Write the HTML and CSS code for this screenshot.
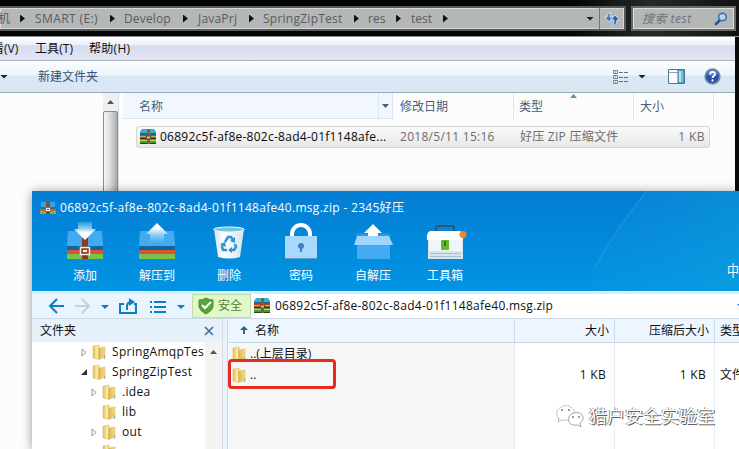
FILE: index.html
```html
<!DOCTYPE html>
<html lang="zh-CN">
<head>
<meta charset="utf-8">
<title>test</title>
<link rel="stylesheet" href="styles.css">
</head>
<body>
<svg class="defs" width="0" height="0">
  <defs>
    <linearGradient id="fold" x1="0" x2="1"><stop offset="0" stop-color="#e3bd4e"/><stop offset=".35" stop-color="#fbeeb0"/><stop offset=".55" stop-color="#e2be57"/><stop offset="1" stop-color="#f3dc85"/></linearGradient>
    <linearGradient id="down" x1="0" x2="0" y1="0" y2="1"><stop offset="0" stop-color="#6dbcf4" stop-opacity=".4"/><stop offset=".6" stop-color="#fff"/></linearGradient>
    <linearGradient id="up" x1="0" x2="0" y1="0" y2="1"><stop offset=".3" stop-color="#fff"/><stop offset="1" stop-color="#6dbcf4" stop-opacity=".3"/></linearGradient>
    <linearGradient id="bin" x1="0" x2="1"><stop offset="0" stop-color="#cfe0ea"/><stop offset=".3" stop-color="#fff"/><stop offset="1" stop-color="#d5e4ec"/></linearGradient>
    <symbol id="zip" viewBox="0 0 16 16">
      <path d="M2 0h12l2 3v3H0V3z" fill="#3babd4"/><path d="M0 4h16v2H0z" fill="#186d91"/>
      <path d="M0 6h16v4H0z" fill="#bf4223"/><path d="M0 7h16v1H0z" fill="#f29a5e"/>
      <path d="M0 10h16v5H0z" fill="#459c2c"/><path d="M0 11h16v1H0z" fill="#a9df61"/><path d="M0 9.5h16M0 14.5h16" stroke="#333a20"/>
      <path d="M7 0h3v15H7z" fill="#8d5a32"/><path d="M6.5 7h4v3h-4z" fill="#e6bd6b" stroke="#684c22"/>
    </symbol>
    <symbol id="folder" viewBox="0 0 14 16">
      <path d="M1 2l6-1v3l6-1v10l-6 2.500-6-1.500z" fill="url(#fold)" stroke="#dcbf6a" stroke-width=".6"/><path d="M7 4v11" stroke="#cfa848" stroke-width=".8"/><path d="M12 11l1 3-1 1" fill="none" stroke="#92aaa9"/>
    </symbol>
  </defs>
</svg>

<main class="desktop">
  <section class="explorer">
    <header class="top">
      <nav class="address">
        <div class="crumbs"><span class="c0">机</span><i></i><span class="c1">SMART (E:)</span><i></i><span class="c2">Develop</span><i></i><span class="c3">JavaPrj</span><i></i><span class="c4">SpringZipTest</span><i></i><span class="c5">res</span><i></i><span class="c6">test</span><i></i></div>
        <b class="caret"></b>
        <div class="refresh"><svg width="16" height="16" viewBox="0 0 16 16"><path d="M7 1Q3 2 3 6H.5L5 11l4-5H6Q6 3 7 1z" fill="#3f83c6" stroke="#dcecf8" stroke-width=".8"/><path d="M9 15q4-1 4-6h2.500L11 4 7 9h3q0 3-1 6z" fill="#285eb0" stroke="#dcecf8" stroke-width=".8"/></svg></div>
      </nav>
      <div class="search"><span>搜索 test</span><svg width="14" height="14" viewBox="0 0 14 14"><path d="M6 8L2 12" stroke="#25558d" stroke-width="2.500" stroke-linecap="round"/><circle cx="8.5" cy="5" r="3.8" fill="#b6d4e8" stroke="#356da9" stroke-width="1.5"/></svg></div>
    </header>
    <div class="menu"><span class="m0">看(V)</span><span class="m1">工具(T)</span><span class="m2">帮助(H)</span></div>
    <div class="tools">
      <b class="caret"></b><span>新建文件夹</span>
      <svg class="views" width="16" height="14" viewBox="0 0 16 14"><g fill="#f7fbff" stroke="#758292"><path d="M.5.5h4v3h-4zM.5 5.5h4v3h-4zM.5 10.5h4v3h-4z"/></g><path d="M2 2h1M2 7h1M2 12h1" stroke="#3a78af"/><path d="M6 2.500h4M11 2.500h4M6 7.500h4M11 7.500h4M6 11.500h4M11 11.500h4" stroke="#617086"/></svg>
      <b class="caret v"></b>
      <svg class="pane" width="17" height="15" viewBox="0 0 17 15"><path d="M.5.5h16v14H.5z" fill="#f8fcff" stroke="#54758f"/><path d="M1 3.5h9" stroke="#8aa8bc"/><path d="M10 1h6v13h-6z" fill="#74bfd5" stroke="#397b99"/><path d="M12 2v11" stroke="#b8e6ed" stroke-width="2"/></svg>
      <svg class="help" width="17" height="17" viewBox="0 0 17 17"><circle cx="8.5" cy="8.5" r="7.3" fill="#284faa" stroke="#7788a0" stroke-width="1.7"/><path d="M3 7a5.5 5.5 0 0 1 11 0Q8 9 3 7" fill="#6b91d7" opacity=".6"/><path d="M6 6.5Q6 4 8.5 4T11 6.2Q11 7.3 9.6 8.1 8.5 8.7 8.5 10" fill="none" stroke="#fff" stroke-width="1.8"/><circle cx="8.5" cy="12.4" r="1.1" fill="#fff"/></svg>
    </div>
    <div class="body">
      <aside class="nav"><div class="scroll"><b></b><i></i></div></aside>
      <div class="files">
        <div class="cols"><span class="name">名称</span><span class="drop"><b class="caret"></b></span><span class="date">修改日期</span><span class="type">类型<b class="sort"></b></span><span class="size">大小</span></div>
        <div class="row"><svg width="16" height="16"><use href="#zip"/></svg><span class="fname">06892c5f-af8e-802c-8ad4-01f1148afe...</span><span class="fdate">2018/5/11 15:16</span><span class="ftype">好压 ZIP 压缩文件</span><span class="fsize">1 KB</span></div>
      </div>
    </div>
  </section>

  <section class="archiver">
    <header class="blue">
      <svg class="beam" width="280" height="100" viewBox="0 0 280 100"><defs><linearGradient id="beam" x1="0" x2="1"><stop offset="0" stop-color="#2aa4e5" stop-opacity=".1"/><stop offset="1" stop-color="#19b0df" stop-opacity=".5"/></linearGradient></defs><path d="M188 0Q151 46 123 100H280V0z" fill="url(#beam)" opacity=".6"/><path d="M188 0Q158 36 136 76" fill="none" stroke="#50b8ee" stroke-opacity=".22" stroke-width="2"/></svg>
      <div class="title"><svg width="16" height="14" viewBox="0 0 16 14"><path d="M1 1h14v5H1z" fill="#36a5dd"/><path d="M1 6h14v2H1z" fill="#21759c"/><path d="M0 8h16v2H0z" fill="#df5739"/><path d="M0 10h16v3H0z" fill="#6ebc49"/><path d="M6 1h4v12H6z" fill="#8c4932"/><path d="M5.5 6.5h5v4h-5z" fill="#fff" stroke="#9b6553"/><path d="M7 8h2v1H7z" fill="#713b29"/></svg><span>06892c5f-af8e-802c-8ad4-01f1148afe40.msg.zip - 2345好压</span></div>
      <div class="actions">
        <div><svg width="40" height="40" viewBox="0 0 40 40"><path d="M3 11h34l1 15H2z" fill="#43aaf0"/><path d="M2 26h36v4H2z" fill="#12669c"/><path d="M2 30h36v4H2z" fill="#d95235"/><path d="M2 34h36v5H2z" fill="#7ac34b"/><path d="M17 18h6v21h-6z" fill="#8b3920"/><path d="M15.5 27.500h9v7h-9z" fill="#8e462f" stroke="#f7e7dd" stroke-width="1.5"/><path d="M18 30h4v2h-4z" fill="#fff"/><path d="M13 2h14v7h4L20 20 9 9h4z" fill="url(#down)"/></svg><span>添加</span></div>
        <div><svg width="40" height="40" viewBox="0 0 40 40"><path d="M3 11h34l1 15H2z" fill="#43aaf0"/><path d="M2 26h36v4H2z" fill="#0c679f"/><path d="M2 30h36v4H2z" fill="#d95235"/><path d="M2 34h36v5H2z" fill="#7ac34b"/><path d="M20 3L31 14h-4v8H13v-8H9z" fill="url(#up)"/></svg><span>解压到</span></div>
        <div><svg width="40" height="40" viewBox="0 0 40 40"><path d="M5 9h30l-4 28q-11 3-22 0z" fill="url(#bin)"/><ellipse cx="20" cy="9.5" rx="15.5" ry="2.5" fill="#73c5df" stroke="#eefbff"/><g fill="none" stroke="#2f93d6" stroke-width="2.500"><path d="M16 22l3-5h3l2 3M26 24l1 3-2 3h-3M18 30h-4l-1-3 1-3"/></g><g fill="#2f93d6"><path d="M26 17v6l-5-2zM23 27v6l-4-3zM11 24l5-2 1 5z"/></g></svg><span>删除</span></div>
        <div><svg width="40" height="40" viewBox="0 0 40 40"><path d="M11 18v-4a9 9 0 0 1 18 0v4" fill="none" stroke="#fff" stroke-width="4"/><rect x="4" y="16" width="32" height="22" rx="1" fill="#aad9fd"/><path d="M4 38.500h32" stroke="#5d9ecc"/><circle cx="20" cy="26" r="3" fill="#427fbd"/><path d="M19 26h2v6h-2z" fill="#427fbd"/></svg><span>密码</span></div>
        <div><svg width="40" height="40" viewBox="0 0 40 40"><path d="M1 16q3-5 14-2h10q11-3 14 2" fill="#239be5" stroke="#168ad3"/><path d="M20 4l9 9h-4v6H15v-6h-4z" fill="#fff"/><path d="M4 20h33v19H4z" fill="#44aaf2"/><path d="M4 16h32l4 9H1z" fill="#9dd5fc"/></svg><span>自解压</span></div>
        <div><svg class="box" width="42" height="40" viewBox="0 0 42 40"><path d="M11 12V8q0-2 3-2h12q3 0 3 2v4" fill="none" stroke="#31546c" stroke-width="2"/><path d="M3 20h35v19H3z" fill="#d7e4ec"/><path d="M5 11h30q4 2 3 9H2q-1-7 3-9z" fill="#fff"/><path d="M4 20h33v11H4z" fill="#edf6fa"/><path d="M5 33.500h31M5 36.500h31" stroke="#a9c0ce"/><rect x="16" y="20" width="8" height="10" rx="1" fill="#64b82b"/><path d="M20 21v5" stroke="#286911" stroke-width="1.5"/><circle cx="38" cy="14.5" r="3.5" fill="#f58424"/></svg><span>工具箱</span></div>
      </div>
      <span class="ime">中</span>
    </header>
    <div class="path">
      <svg width="160" height="24" viewBox="0 0 160 24"><g fill="none" stroke="#087fc7" stroke-width="2"><path d="M32 12H19M25 5l-7 7 7 7"/><path stroke="#c5cfd5" d="M43 12h13M50 5l7 7-7 7"/><path d="M92 10h-4v9h16v-9h-2M95 16v-4q0-4 5-4"/></g><path d="M69 11h8l-4 4zM145 11h8l-4 4z" fill="#087fc7"/><path d="M97 4l6 4-6 4z" fill="#087fc7"/><path d="M118 8h2M122 8h12M118 13h2M122 13h12M118 18h2M122 18h12" stroke="#087fc7" stroke-width="2"/></svg>
      <div class="safe"><svg width="18" height="18" viewBox="0 0 18 18"><path d="M9 1q3 2 7 2v7q-1 4-7 7-6-3-7-7V3q4 0 7-2z" fill="#57a53a" stroke="#4c9038"/><path d="M5 8l3 3 6-6" fill="none" stroke="#fff" stroke-width="2"/></svg><span>安全</span></div>
      <div class="file"><svg width="16" height="16"><use href="#zip"/></svg><span>06892c5f-af8e-802c-8ad4-01f1148afe40.msg.zip</span><b></b></div>
    </div>
    <div class="content">
      <aside class="tree">
        <header><span>文件夹</span><svg width="10" height="10" viewBox="0 0 10 10"><path d="M1 1l8 8M9 1L1 9" stroke="#416b8e" stroke-width="1.6"/></svg></header>
        <div class="treebody">
          <ul>
            <li class="clip"><svg class="tri" width="7" height="9" viewBox="0 0 7 9"><path d="M1 1v7l4-3.5z" fill="#fff" stroke="#999"/></svg><svg width="14" height="16"><use href="#folder"/></svg><span>SpringAmqpTes</span></li>
            <li><svg class="tri" width="7" height="9" viewBox="0 0 7 9"><path d="M6 1v6H0z" fill="#333"/></svg><svg width="14" height="16"><use href="#folder"/></svg><span>SpringZipTest</span></li>
            <li class="deep"><svg class="tri" width="7" height="9" viewBox="0 0 7 9"><path d="M1 1v7l4-3.5z" fill="#fff" stroke="#999"/></svg><svg width="14" height="16"><use href="#folder"/></svg><span>.idea</span></li>
            <li class="deep"><i class="tri"></i><svg width="14" height="16"><use href="#folder"/></svg><span>lib</span></li>
            <li class="deep"><svg class="tri" width="7" height="9" viewBox="0 0 7 9"><path d="M1 1v7l4-3.5z" fill="#fff" stroke="#999"/></svg><svg width="14" height="16"><use href="#folder"/></svg><span>out</span></li>
            <li class="deep"><i class="tri"></i><svg width="14" height="16"><use href="#folder"/></svg></li>
          </ul>
          <div class="track"><b></b></div>
        </div>
      </aside>
      <div class="split"></div>
      <div class="list">
        <div class="heads"><span><svg width="8" height="9" viewBox="0 0 8 9"><path d="M4 0l4 4H5v4H3V4H0z" fill="#296793"/></svg><em>名称</em></span><span>大小</span><span>压缩后大小</span><span>类型</span></div>
        <div class="cells">
          <div class="names"><div class="item"><svg width="14" height="16"><use href="#folder"/></svg><span>..(上层目录)</span></div><div class="item second"><svg width="14" height="16"><use href="#folder"/></svg><span>..</span></div></div>
          <span class="num">1 KB</span><span class="num">1 KB</span><span class="kind">文件夹</span>
        </div>
      </div>
    </div>
    <div class="red"></div>
  </section>
  <div class="mark"><svg width="30" height="25" viewBox="0 0 30 25"><g fill="#fff" stroke="#a1a5a7" stroke-width="1"><path d="M4 15l-1 3 4-2q4 1 8-1M4 15Q-1 8 5 4q6-5 12 0 4 3 1 8" stroke-dasharray="2 1"/><path d="M23 21q-7 1-9-3-2-6 4-9 8-2 10 4 1 4-3 6l1 4z"/></g><g fill="#777"><circle cx="7" cy="6" r="1"/><circle cx="14" cy="6" r="1"/><circle cx="18" cy="13" r="1"/><circle cx="24" cy="13" r="1"/></g></svg><span>猎户安全实验室</span></div>
</main>
</body>
</html>
```
FILE: styles.css
```css
* { box-sizing: border-box; }
body { margin: 0; overflow: hidden; font: 12px/16px "Open Sans", "Noto Sans CJK SC", sans-serif; color: #111; }
svg { display: block; flex: none; }
.defs { position: absolute; }
span { white-space: nowrap; flex: none; }
.desktop { position: relative; width: 739px; height: 449px; overflow: hidden; background: #090b0c; }
.explorer { height: 449px; }
.top { height: 37px; padding-top: 6px; display: flex; gap: 5px; background: linear-gradient(90deg, #030504 0 77%, #27292a 88%, #111); border-bottom: 1px solid #8c9090; }
.address { width: 626px; height: 25px; display: flex; align-items: center; background: #b5b7b7; border: 2px solid #555957; border-left: 0; box-shadow: inset 0 0 0 1px #d5d9d9; color: #565b60; }
.crumbs { width: 587px; display: flex; align-items: center; }
.crumbs i { width: 5px; height: 8px; background: #111; clip-path: polygon(0 0, 100% 50%, 0 100%); flex: none; }
.c0 { width: 22px; margin-left: -2px; }
.c1 { width: 75px; margin-left: 10px; letter-spacing: .4px; }
.c2 { width: 59px; margin-left: 9px; letter-spacing: .15px; }
.c3 { width: 51px; margin-left: 10px; letter-spacing: .2px; }
.c4 { width: 91px; margin-left: 9px; letter-spacing: .25px; }
.c5 { width: 28px; margin-left: 9px; }
.c6 { width: 32px; margin-left: 10px; }
.caret { width: 8px; height: 4px; background: #152237; clip-path: polygon(0 0, 100% 0, 50% 100%); flex: none; }
.refresh { width: 25px; height: 21px; margin-left: 5px; padding: 3px 4px; border-left: 1px solid #737777; }
.search { width: 105px; height: 25px; padding: 0 6px 0 9px; display: flex; align-items: center; justify-content: space-between; background: #b5b7b7; border: 2px solid #656a68; box-shadow: inset 0 0 0 1px #dadedd; color: #6b7277; font-style: italic; letter-spacing: .5px; }
.menu { width: 735px; height: 24px; display: flex; align-items: center; background: linear-gradient(#fff, #edf0fa 33%, #d7dcef 38%, #e2e5f3); border-bottom: 1px solid #adb3c2; }
.m0 { width: 39px; margin-left: -8px; }
.m1 { width: 54px; margin-left: 4px; letter-spacing: .1px; }
.m2 { letter-spacing: .3px; }
.tools { width: 735px; height: 32px; display: flex; align-items: center; background: linear-gradient(#fafdff, #edf5fc 45%, #dbe6f4 49%, #dbe7f5); border-bottom: 1px solid #9ba9bb; color: #315277; }
.tools span { width: 120px; margin-left: 30px; }
.tools > .caret:first-child { margin-left: 0; }
.views { margin-left: 455px; }
.caret.v { margin-left: 9px; }
.pane { margin-left: 22px; }
.help { margin-left: 19px; }
.body { width: 735px; height: 356px; display: flex; background: #fcfcfc; }
.nav { width: 119px; padding-left: 103px; border-right: 1px solid #d5e1ec; }
.scroll { width: 15px; height: 100%; padding-top: 1px; background: #f0f0f0; }
.scroll b { display: block; width: 7px; height: 4px; margin: 6px 4px 7px; background: #555; clip-path: polygon(50% 0, 100% 100%, 0 100%); }
.scroll i { display: block; height: 330px; background: linear-gradient(90deg, #f7f7f7, #ddd 45%, #aaa); border: 1px solid #8c8c8c; border-radius: 2px; }
.files { width: 616px; padding-left: 4px; }
.cols { height: 26px; display: flex; line-height: 27px; color: #465e79; }
.cols > span { border-right: 1px solid #d9e5f0; }
.name { width: 256px; padding-left: 16px; background: #f2f7fd; border-bottom: 1px solid #d9e5f0; }
.drop { width: 14px; padding: 11px 3px; background: #f2f7fd; border-bottom: 1px solid #d9e5f0; }
.drop .caret { display: block; width: 7px; background: #465e79; }
.date { width: 121px; padding-left: 7px; }
.type { width: 120px; padding-left: 5px; position: relative; }
.sort { position: absolute; top: 1px; left: 56px; width: 7px; height: 4px; background: #5f91a7; clip-path: polygon(50% 0, 100% 100%, 0 100%); }
.size { width: 80px; padding-left: 6px; }
.row { width: 574px; height: 22px; margin: 7px 0 0 13px; padding: 0 4px 0 3px; display: flex; align-items: center; border: 1px solid #d4d4d4; border-radius: 3px; background: linear-gradient(#fafafa, #e8e8e8); color: #6d6d6d; }
.fname { width: 240px; margin-left: 4px; color: #080808; letter-spacing: .26px; }
.fdate { width: 120px; letter-spacing: .28px; }
.ftype { width: 145px; letter-spacing: .25px; }
.fsize { margin-left: auto; letter-spacing: .4px; }

.archiver { position: absolute; left: 32px; top: 191px; width: 707px; height: 258px; background: #fff; box-shadow: 0 1px 10px #0006; }
.blue { height: 100px; position: relative; overflow: hidden; background: linear-gradient(#047dd3, #0194e2); color: #fff; }
.beam { position: absolute; top: 0; left: 427px; }
.title { height: 28px; padding: 5px 0 0 8px; display: flex; align-items: center; }
.title span { margin-left: 4px; letter-spacing: .3px; }
.actions { padding: 1px 0 0 17px; display: flex; }
.actions div { width: 72px; display: flex; flex-direction: column; align-items: center; gap: 8px; }
.actions .box { margin-left: 2px; }
.ime { position: absolute; right: 0; top: 70px; font-size: 15px; line-height: 18px; transform: scaleX(.8); transform-origin: right; }
.path { height: 28px; display: flex; background: #eaf4fd; border-top: 3px solid #d9edfa; border-bottom: 1px solid #cddbe9; }
.safe { width: 59px; display: flex; align-items: center; padding-left: 4px; background: #e1f8c9; border: 1px solid #bfdda5; color: #52812f; }
.safe span { margin-left: 3px; }
.file { flex: 1; display: flex; align-items: center; padding-left: 3px; background: #fff; }
.file span { margin-left: 5px; letter-spacing: .26px; }
.file b { width: 8px; height: 4px; margin: 0 -6px 0 auto; background: #087fc7; clip-path: polygon(0 0, 100% 0, 50% 100%); }
.content { height: 130px; display: flex; }
.tree { width: 190px; }
.tree header { height: 23px; padding: 0 8px; display: flex; align-items: center; justify-content: space-between; background: #e7f1fc; }
.treebody { height: 107px; display: flex; overflow: hidden; }
.tree ul { width: 173px; margin: 0; padding: 0; list-style: none; overflow: hidden; font-size: 12px; }
.tree li { height: 20px; padding-left: 49px; display: flex; align-items: center; }
.tree .deep { padding-left: 59px; }
.tri { width: 7px; margin-right: 4px; }
.tree li span { margin-left: 6px; letter-spacing: .3px; }
.track { width: 17px; background: #f3f3f3; padding: 8px 5px; }
.track b { display: block; width: 7px; height: 4px; background: #555; clip-path: polygon(50% 0, 100% 100%, 0 100%); }
.split { width: 6px; background: #e9f2fb; border-left: 1px solid #d2dfea; border-right: 1px solid #ccd9e6; }
.list { width: 511px; }
.heads, .cells { display: grid; grid-template-columns: 287px 100px 100px 24px; }
.heads { height: 24px; line-height: 23px; background: #edf5fe; border-bottom: 1px solid #c9d7e5; }
.heads span { border-right: 1px solid #cedbe7; text-align: right; padding-right: 5px; }
.heads span:first-child { display: flex; align-items: center; padding-left: 12px; }
.heads em { font-style: normal; margin-left: 7px; }
.heads span:last-child { border: 0; padding: 0 0 0 5px; text-align: left; }
.cells { height: 106px; }
.names { padding: 2px 4px; background: #f6f6f6; border-right: 1px solid #e5e9ef; }
.item { height: 18px; display: flex; align-items: center; }
.item span { margin-left: 4px; }
.second { height: 22px; margin-top: 1px; }
.num, .kind { padding-top: 24px; text-align: right; padding-right: 8px; border-right: 1px solid #e6edf4; letter-spacing: .3px; }
.kind { text-align: left; padding: 24px 0 0 5px; border: 0; letter-spacing: 0; }
.red { position: absolute; left: 196px; top: 168px; width: 108px; height: 30px; border: 3px solid #e8291e; border-radius: 4px; }
.mark { position: absolute; left: 555px; top: 404px; display: flex; align-items: center; color: #fff; font-size: 18px; line-height: 25px; text-shadow: 1px 1px 0 #626262, -1px 0 0 #8c8c8c; }
.mark span { margin-left: 4px; }
```
